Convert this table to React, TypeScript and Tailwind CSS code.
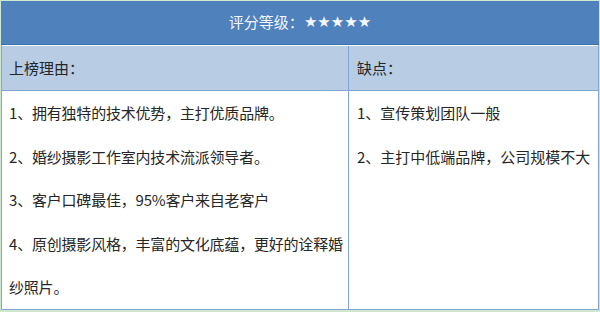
import React from 'react';

const pros = [
  '1、拥有独特的技术优势，主打优质品牌。',
  '2、婚纱摄影工作室内技术流派领导者。',
  '3、客户口碑最佳，95%客户来自老客户',
  '4、原创摄影风格，丰富的文化底蕴，更好的诠释婚',
  '纱照片。',
];

const cons = ['1、宣传策划团队一般', '2、主打中低端品牌，公司规模不大'];

const App: React.FC = () => {
  return (
    <div
      className="w-[600px] h-[312px] bg-[#cfe6cf] pt-px px-px text-[15px] text-[#262626]"
      style={{ fontFamily: '"Noto Sans CJK SC", "Noto Sans", sans-serif' }}
    >
      <div className="w-[598px] border-x border-b border-[#7fa5d3] bg-white">
        <div className="h-[44px] bg-[#4f81bd] border-b border-[#3f70ad] flex items-center justify-center text-[#f4f7fb] -mx-px">
          <span>评分等级：</span>
          <span style={{ fontFamily: '"DejaVu Sans", sans-serif' }}>★★★★★</span>
        </div>
        <div className="grid grid-cols-[347px_1fr] bg-[#b8cce4] border-t border-white border-b border-b-[#7fa5d3] h-[46px]">
          <div className="pl-[7px] flex items-center border-r border-[#7fa5d3]">上榜理由：</div>
          <div className="pl-[8px] flex items-center">缺点：</div>
        </div>
        <div className="grid grid-cols-[347px_1fr] h-[218px]">
          <div className="pl-[7px] leading-[43.6px] tracking-[-0.2px] border-r border-[#7fa5d3]">
            {pros.map((p) => (
              <p key={p} className="whitespace-nowrap">{p}</p>
            ))}
          </div>
          <div className="pl-[8px] leading-[43.6px]">
            {cons.map((c) => (
              <p key={c}>{c}</p>
            ))}
          </div>
        </div>
      </div>
    </div>
  );
};

export default App;
